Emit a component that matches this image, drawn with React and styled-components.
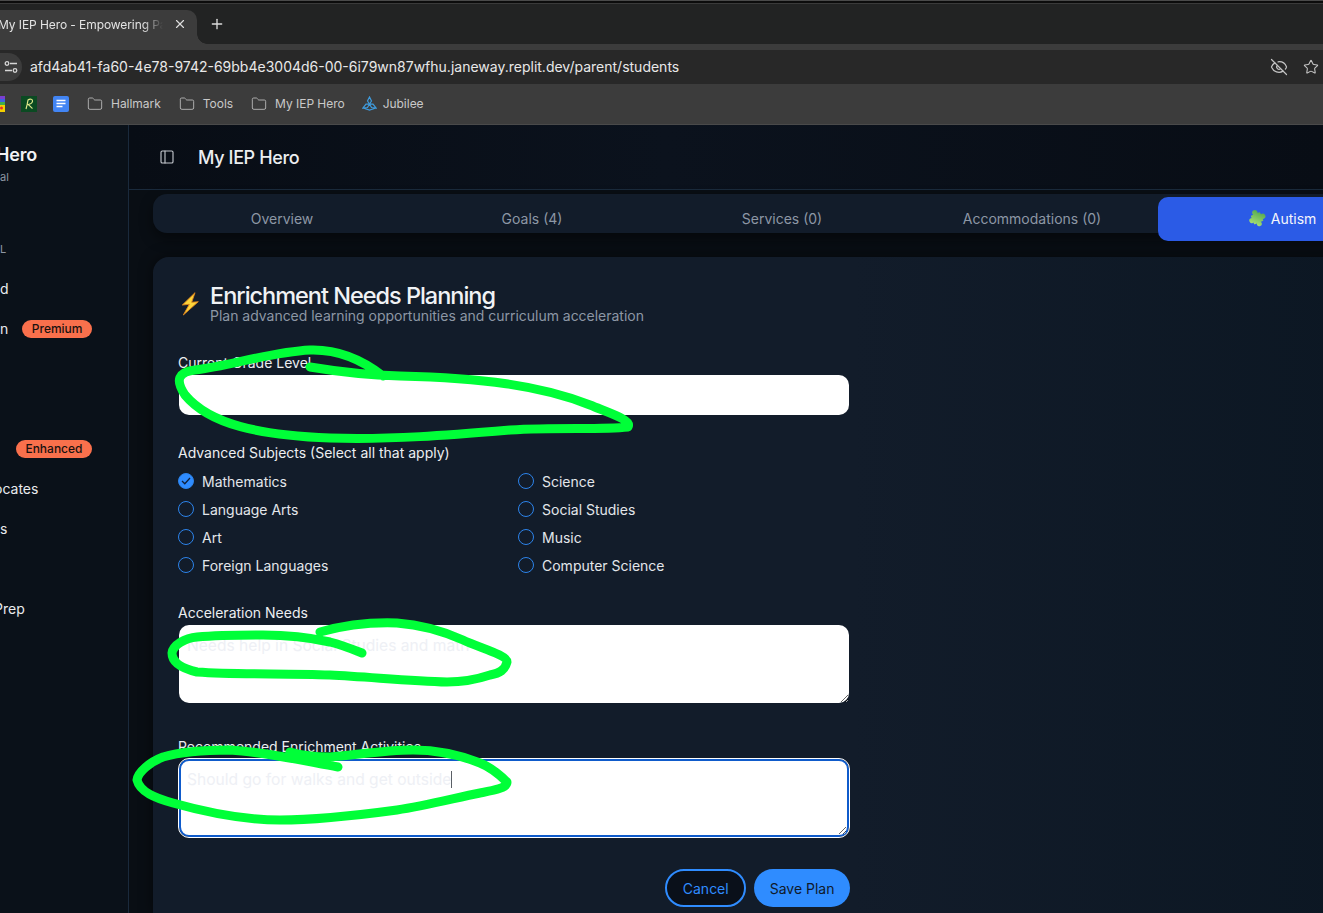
import React from "react";
import styled, { createGlobalStyle } from "styled-components";
import { EyeOff, Folder, PanelLeft, Plus, Star, X } from "lucide-react";

const GlobalStyle = createGlobalStyle`
	html, body {
		margin: 0;
		height: 913px;
		overflow: hidden;
		background: #0a0f16;
		font-family: Inter, "Noto Sans", sans-serif;
	}
	* {
		box-sizing: border-box;
	}
`;

const Page = styled.div`
	position: relative;
	width: 1323px;
	height: 913px;
	display: flex;
	flex-direction: column;
	overflow: hidden;
`;

/* browser chrome */
const TabStrip = styled.div`
	height: 44px;
	flex: none;
	display: flex;
	align-items: flex-end;
	background: #222323;
	border-top: 4px solid;
	border-image: linear-gradient(#4a4a4a 0 1px, #0c0c0c 1px 3px, #3a3a3a 3px) 4;
`;

const BrowserTab = styled.div`
	position: relative;
	width: 218px;
	height: 34px;
	margin-left: -21px;
	margin-right: 12px;
	padding: 0 0 6px 20px;
	display: flex;
	align-items: center;
	background: #3c3c3c;
	border-radius: 10px 10px 0 0;
	color: #e3e3e3;
	font-size: 12px;

	&::after {
		content: "";
		position: absolute;
		right: -10px;
		bottom: 0;
		width: 10px;
		height: 10px;
		background: radial-gradient(circle at 100% 0, transparent 9.5px, #3c3c3c 10px);
	}
`;

const TabTitle = styled.span`
	width: 167px;
	margin-left: -1px;
	white-space: nowrap;
	letter-spacing: -0.08px;
	-webkit-mask-image: linear-gradient(to right, #000 145px, transparent 165px);
	mask-image: linear-gradient(to right, #000 145px, transparent 165px);
`;

const TabClose = styled(X)`
	margin-left: 8px;
	color: #dedede;
`;

const NewTab = styled(Plus)`
	margin: 0 0 12px;
	color: #dcdcdc;
`;

const Toolbar = styled.div`
	height: 40px;
	flex: none;
	padding-top: 6px;
	background: #3c3c3c;
`;

const AddressBar = styled.div`
	height: 34px;
	display: flex;
	align-items: center;
	background: #282828;
	color: #e8e8e8;
	font-size: 14px;
`;

const SiteButton = styled.div`
	width: 22px;
	height: 28px;
	flex: none;
	margin-right: 8px;
	display: flex;
	align-items: center;
	justify-content: flex-end;
	background: #3c3c3c;
	border-radius: 0 14px 14px 0;
	padding-right: 3px;
`;

const Url = styled.span`
	flex: 1;
	padding-bottom: 2px;
	white-space: nowrap;
`;

const EndIcons = styled.div`
	display: flex;
	align-items: center;
	gap: 15px;
	padding-right: 4px;
	color: #c4c4c4;
`;

const BookmarkBar = styled.div`
	height: 41px;
	flex: none;
	display: flex;
	align-items: center;
	padding-bottom: 1px;
	background: #3c3c3c;
	border-bottom: 1px solid #4a4a4a;
	color: #c9c9c9;
	font-size: 12px;
	letter-spacing: -0.03px;
`;

const Bookmark = styled.div`
	display: flex;
	align-items: center;
	gap: ${(p) => p.$gap || 8}px;
	margin-right: ${(p) => p.$right || 18}px;
	white-space: nowrap;
`;

const BookmarkFolder = styled(Folder)`
	color: #b5b5b5;
`;

const IconSlot = styled.span`
	display: block;
	width: ${(p) => p.$width || 16}px;
	height: 16px;
	margin-right: ${(p) => p.$gap}px;
	flex: none;
`;

/* app */
const AppShell = styled.div`
	flex: 1;
	display: flex;
	min-height: 0;
`;

const Sidebar = styled.aside`
	width: 129px;
	flex: none;
	display: flex;
	flex-direction: column;
	background: #0a1119;
	border-right: 1px solid #1a2a3c;
	color: #e9ebee;
	font-size: 14px;
	overflow: hidden;
`;

const Brand = styled.div`
	height: 71px;
	padding-top: 19px;
	font-size: 18px;
	font-weight: 600;
	line-height: 22px;
	color: #f1f2f4;
`;

const BrandName = styled.div`
	margin-left: -4px;
	letter-spacing: -0.2px;
`;

const BrandSub = styled.div`
	margin-top: 3px;
	font-size: 11px;
	font-weight: 400;
	line-height: 16px;
	color: #8d96a3;
`;

const SectionLabel = styled.div`
	height: 73px;
	padding-top: 45px;
	font-size: 11px;
	line-height: 16px;
	color: #8d96a3;
`;

const NavRow = styled.div`
	height: 40px;
	flex: none;
	display: flex;
	align-items: center;
	justify-content: space-between;
	padding: 0 36px 1px 0;
`;

const NavText = styled.span`
	margin-left: ${(p) => p.$shift || 0}px;
	padding-bottom: 1px;
`;

const Badge = styled.span`
	height: 18px;
	margin-left: auto;
	padding: 0 9.5px;
	display: flex;
	align-items: center;
	background: #f9704c;
	border-radius: 9px;
	color: #1a1210;
	font-size: 12px;
	font-weight: 500;
`;

const Main = styled.main`
	flex: 1;
	min-width: 0;
	display: flex;
	flex-direction: column;
	background: #090e14;
`;

const Header = styled.header`
	height: 65px;
	flex: none;
	display: flex;
	align-items: center;
	gap: 23px;
	padding-left: 30px;
	background: linear-gradient(90deg, #080d15, #0b121d 45%, #080d15);
	border-bottom: 1px solid #1a2a3c;
	color: #eceef1;
	font-size: 18px;
	font-weight: 500;
	letter-spacing: -0.37px;
`;

const HeaderIcon = styled(PanelLeft)`
	color: #c4c8ce;
`;

const Content = styled.div`
	flex: 1;
	padding: 4px 0 0 24px;
	display: flex;
	flex-direction: column;
	width: 1400px;
`;

const TabBar = styled.div`
	width: 1400px;
	height: 39px;
	flex: none;
	display: flex;
	align-items: flex-start;
	padding: 3px 5px 0;
	background: #121c2a;
	border-radius: 14px;
	box-shadow: 0 6px 14px rgba(0, 0, 0, 0.45);
`;

const TabItem = styled.div`
	position: relative;
	width: 250px;
	height: 44px;
	flex: none;
	display: flex;
	align-items: center;
	justify-content: center;
	gap: 5px;
	padding: 0 2px 2px 0;
	border-radius: 10px;
	background: ${(p) => (p.$active ? "#2b5be6" : "transparent")};
	color: ${(p) => (p.$active ? "#f4f6fc" : "#8d97a5")};
	font-size: 14px;
`;

const Card = styled.section`
	width: 1400px;
	flex: 1;
	margin-top: 24px;
	padding: 27px 26px 0 25px;
	background: linear-gradient(90deg, #121c2a 0, #121c2a 700px, #0c1723 1200px);
	border-radius: 16px 16px 0 0;
	box-shadow: 0 0 14px rgba(0, 0, 0, 0.5);
`;

const CardHead = styled.div`
	height: 39px;
	display: flex;
	align-items: center;
	gap: 10px;
	margin-bottom: 31px;
	margin-left: 2px;
`;

const CardTitle = styled.h2`
	margin: 0;
	font-size: 23.5px;
	line-height: 24px;
	font-weight: 500;
	letter-spacing: -1.02px;
	color: #f0f2f5;
`;

const CardSub = styled.p`
	margin: 0;
	font-size: 14px;
	line-height: 16px;
	letter-spacing: -0.02px;
	color: #8d97a5;
`;

const Form = styled.div`
	width: 671px;
	display: flex;
	flex-direction: column;
`;

const Label = styled.div`
	height: 17px;
	font-size: 14px;
	line-height: 17px;
	color: #eceef1;
	white-space: nowrap;
	margin-top: ${(p) => p.$top || 0}px;
`;

const TextInput = styled.input`
	display: block;
	width: 670px;
	height: 40px;
	margin: 4px 0 0 1px;
	border: 0;
	border-radius: 10px;
	background: #fff;
`;

const TextArea = styled.div`
	width: 670px;
	height: 78px;
	margin: 4px 0 0 1px;
	padding: ${(p) => (p.$focused ? "9px 6px" : "11px 8px")};
	background: #fff;
	border: ${(p) => (p.$focused ? "2px solid #0f5bcb" : "0")};
	outline: ${(p) => (p.$focused ? "1px solid #fff" : "0")};
	border-radius: 10px;
	color: #eef0f5;
	font-size: 15.6px;
	line-height: 20px;
	overflow: auto;
	resize: vertical;
`;

const Caret = styled.span`
	display: inline-block;
	width: 1px;
	height: 17px;
	vertical-align: -3px;
	background: #5a5f66;
`;

const SubjectGrid = styled.div`
	display: grid;
	grid-template-columns: 340px 1fr;
	grid-auto-rows: 28px;
	margin-top: 6px;
	margin-bottom: 25px;
`;

const Subject = styled.div`
	display: flex;
	align-items: center;
	gap: 8px;
	color: #e3e6ea;
	font-size: 14px;
`;

const Radio = styled.span`
	width: 16px;
	height: 16px;
	display: flex;
	align-items: center;
	justify-content: center;
	border-radius: 50%;
	border: 1px solid #2c83ea;
	background: ${(p) => (p.$checked ? "#2f8cff" : "transparent")};
`;

const Actions = styled.div`
	display: flex;
	justify-content: flex-end;
	gap: 8px;
	margin: 32px -1px 0 0;
`;

const Button = styled.button`
	height: 38px;
	padding: 0 15.5px;
	border-radius: 20px;
	border: ${(p) => (p.$primary ? "0" : "2px solid #2f8cff")};
	background: ${(p) => (p.$primary ? "#2f8cff" : "#0a101a")};
	color: ${(p) => (p.$primary ? "#0f1a2b" : "#2f8cff")};
	font-family: inherit;
	font-size: 14px;
`;

const Scribbles = styled.svg`
	position: absolute;
	inset: 0;
	pointer-events: none;
	fill: none;
	stroke: #00ff38;
	stroke-width: 9;
	stroke-linecap: round;
	stroke-linejoin: round;
`;

const subjects = [
	["Mathematics", true],
	["Science"],
	["Language Arts"],
	["Social Studies"],
	["Art"],
	["Music"],
	["Foreign Languages"],
	["Computer Science"],
];

const tabs = ["Overview", "Goals (4)", "Services (0)", "Accommodations (0)"];

const navRows = [
	{ text: "d" },
	{ text: "n", badge: "Premium" },
	{},
	{},
	{ badge: "Enhanced" },
	{ text: "ocates", shift: -6 },
	{ text: "s" },
	{},
	{ text: "Prep", shift: -6 },
];

function SiteControls() {
	return (
		<svg width="16" height="14" viewBox="0 0 16 14" fill="none" stroke="#d6d6d6" strokeWidth="1.3">
			<circle cx="4" cy="3.5" r="1.8" />
			<path d="M7 3.5h7M2 10.5h7" />
			<circle cx="12" cy="10.5" r="1.8" />
		</svg>
	);
}

function RainbowIcon() {
	return (
		<svg width="5" height="16" viewBox="0 0 5 16">
			<rect y="0" width="5" height="3" fill="#7a3fd0" />
			<rect y="3" width="5" height="3" fill="#3c62e0" />
			<rect y="6" width="5" height="3" fill="#3fae49" />
			<rect y="9" width="5" height="7" fill="#f4d000" />
			<circle cx="1.5" cy="12" r="1.5" fill="#e2322d" />
		</svg>
	);
}

function RIcon() {
	return (
		<svg width="16" height="16" viewBox="0 0 16 16">
			<rect width="16" height="16" fill="#0b4a22" />
			<path d="M5 13c1-3 1.500-6 2-9 2-1.500 5-1 4.500 1.500S8.500 8 7 8.500c2 1 3 3 4.500 4" fill="none" stroke="#dfe88a" strokeWidth="1.200" />
		</svg>
	);
}

function DocsIcon() {
	return (
		<svg width="16" height="16" viewBox="0 0 16 16">
			<rect width="16" height="16" rx="2" fill="#4285f4" />
			<path d="M3.500 4.500h9M3.500 7.500h9M3.500 10.500h6" stroke="#fff" strokeWidth="1.500" />
		</svg>
	);
}

function JubileeIcon() {
	return (
		<svg width="15" height="15" viewBox="0 0 15 15" fill="none" stroke="#3f9bdc" strokeWidth="1.200">
			<path d="M7.500 1 5.500 5l2 3 2-3zM1 12l4.500-.5 2-3.500-3.500.2zM14 12l-4.500-.5-2-3.500 3.500.2zM1 12l6.500 2 6.500-2" />
		</svg>
	);
}

function Lightning() {
	return (
		<svg width="20" height="24" viewBox="0 0 20 24">
			<path d="M15 .7 2.300 13l7-.7L3.300 23 18.300 9.700l-6.600.6z" fill="#fdd53a" stroke="#e0841c" strokeWidth="0.900" strokeLinejoin="round" />
		</svg>
	);
}

function PuzzlePiece() {
	return (
		<svg width="18" height="18" viewBox="0 0 18 18">
			<defs>
				<linearGradient id="puzzleFill" gradientUnits="userSpaceOnUse" x1="2" y1="16" x2="16" y2="2">
					<stop offset="0" stopColor="#b6e878" />
					<stop offset="1" stopColor="#46a04a" />
				</linearGradient>
			</defs>
			<g fill="url(#puzzleFill)" transform="rotate(-22 9 9)">
				<rect x="4" y="4.500" width="10" height="9.500" rx="0.800" />
				<circle cx="9" cy="3.300" r="2.700" />
				<circle cx="15" cy="9.500" r="2.700" />
				<circle cx="9" cy="15.200" r="2.500" />
				<circle cx="3.200" cy="9.500" r="2.500" />
			</g>
		</svg>
	);
}

export default function App() {
	return (
		<Page>
			<GlobalStyle />
			<TabStrip>
				<BrowserTab>
					<TabTitle>My IEP Hero - Empowering Pa</TabTitle>
					<TabClose size={14} strokeWidth={2} />
				</BrowserTab>
				<NewTab size={16} strokeWidth={2} />
			</TabStrip>
			<Toolbar>
				<AddressBar>
					<SiteButton>
						<SiteControls />
					</SiteButton>
					<Url>afd4ab41-fa60-4e78-9742-69bb4e3004d6-00-6i79wn87wfhu.janeway.replit.dev/parent/students</Url>
					<EndIcons>
						<EyeOff size={18} strokeWidth={1.6} />
						<Star size={16} strokeWidth={1.6} />
					</EndIcons>
				</AddressBar>
			</Toolbar>
			<BookmarkBar>
				<IconSlot $width={5} $gap={16}>
					<RainbowIcon />
				</IconSlot>
				<IconSlot $gap={16}>
					<RIcon />
				</IconSlot>
				<IconSlot $gap={18}>
					<DocsIcon />
				</IconSlot>
				<Bookmark>
					<BookmarkFolder size={16} strokeWidth={1.4} />
					Hallmark
				</Bookmark>
				<Bookmark>
					<BookmarkFolder size={16} strokeWidth={1.4} />
					Tools
				</Bookmark>
				<Bookmark $right={17}>
					<BookmarkFolder size={16} strokeWidth={1.4} />
					My IEP Hero
				</Bookmark>
				<Bookmark $gap={6}>
					<JubileeIcon />
					Jubilee
				</Bookmark>
			</BookmarkBar>
			<AppShell>
				<Sidebar>
					<Brand>
						<BrandName>Hero</BrandName>
						<BrandSub>al</BrandSub>
					</Brand>
					<SectionLabel>L</SectionLabel>
					{navRows.map((row, i) => (
						<NavRow key={i}>
							{row.text && <NavText $shift={row.shift}>{row.text}</NavText>}
							{row.badge && <Badge>{row.badge}</Badge>}
						</NavRow>
					))}
				</Sidebar>
				<Main>
					<Header>
						<HeaderIcon size={16} strokeWidth={1.7} />
						My IEP Hero
					</Header>
					<Content>
						<TabBar>
							{tabs.map((tab) => (
								<TabItem key={tab}>{tab}</TabItem>
							))}
							<TabItem $active>
								<PuzzlePiece />
								Autism
							</TabItem>
						</TabBar>
						<Card>
							<CardHead>
								<Lightning />
								<div>
									<CardTitle>Enrichment Needs Planning</CardTitle>
									<CardSub>Plan advanced learning opportunities and curriculum acceleration</CardSub>
								</div>
							</CardHead>
							<Form>
								<Label>Current Grade Level</Label>
								<TextInput readOnly />
								<Label $top={29}>Advanced Subjects (Select all that apply)</Label>
								<SubjectGrid>
									{subjects.map(([name, checked]) => (
										<Subject key={name}>
											<Radio $checked={checked}>
												{checked && (
													<svg width="10" height="8" viewBox="0 0 10 8" fill="none" stroke="#10203a" strokeWidth="1.300">
														<path d="M1 4l2.800 2.800L9 1" />
													</svg>
												)}
											</Radio>
											{name}
										</Subject>
									))}
								</SubjectGrid>
								<Label>Acceleration Needs</Label>
								<TextArea>Needs help in Social Studies and math</TextArea>
								<Label $top={35}>Recommended Enrichment Activities</Label>
								<TextArea $focused>
									Should go for walks and get outside
									<Caret />
								</TextArea>
								<Actions>
									<Button>Cancel</Button>
									<Button $primary>Save Plan</Button>
								</Actions>
							</Form>
						</Card>
					</Content>
				</Main>
			</AppShell>
			<Scribbles width="1323" height="913" viewBox="0 0 1323 913">
				<path d="M310 367C340 372 365 375 400 376C480 378 540 385 590 405C612 414 632 420 628 427C600 430 560 427 510 430C450 435 390 440 330 438C260 435 210 425 185 395C175 380 178 372 195 370C230 366 270 352 310 350C340 349 365 362 383 376" />
				<path d="M320 632C345 625 370 622 397 623C425 625 445 632 463 640C480 648 507 655 507 662C505 670 500 673 490 675C475 680 460 682 447 682C410 681 370 677 330 675C285 673 240 675 197 672C180 668 172 662 172 653C173 645 185 638 197 637C220 635 240 635 263 635C290 635 312 638 330 642C342 645 352 649 362 653" />
				<path d="M338 767C300 760 265 752 230 750C205 750 180 752 163 757C150 762 138 772 137 780C140 792 155 798 173 803C205 812 240 820 280 820C320 820 360 815 397 810C425 806 455 798 480 793C495 790 507 788 507 782C500 775 490 767 480 763C460 755 435 750 413 750C385 750 355 755 330 757C315 757 300 755 290 752" />
			</Scribbles>
		</Page>
	);
}
